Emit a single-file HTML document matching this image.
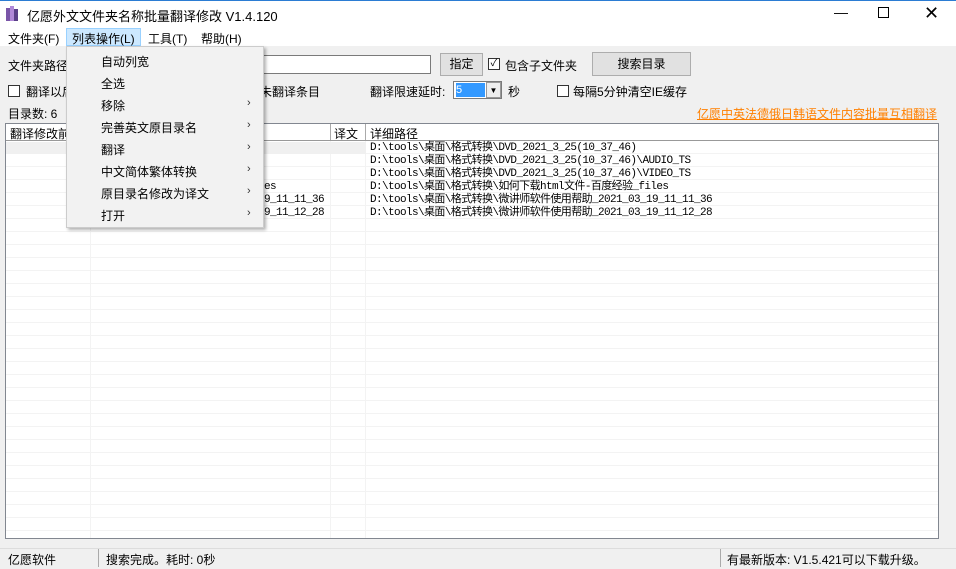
<!DOCTYPE html>
<html><head><meta charset="utf-8"><style>
*{margin:0;padding:0;box-sizing:border-box}
body{width:956px;height:569px;background:#f0f0f0;font-family:"Liberation Sans","Noto Sans CJK SC",sans-serif;font-size:12px;color:#000;position:relative;overflow:hidden}
.a{position:absolute;white-space:nowrap}
.mono{font-family:"Liberation Mono","Noto Sans CJK SC",monospace;font-size:11px;letter-spacing:-0.6px}
.cb{position:absolute;width:12px;height:12px;border:1px solid #333;background:#fff}
.btn{position:absolute;background:#e1e1e1;border:1px solid #adadad;text-align:center}
.mi{position:absolute;left:34px;font-size:12px}
.ar{position:absolute;left:180px;font-size:11px;color:#333}
</style></head><body>
<div class="a" style="left:0;top:0;width:956px;height:28px;background:#fff;border-top:1px solid #2b7cd3"></div>
<svg class="a" style="left:6px;top:6px" width="14" height="16"><rect x="0" y="2" width="4" height="13" fill="#7a55a8"/><rect x="4" y="0" width="4" height="15" fill="#b088d8"/><rect x="8" y="3" width="4" height="12" fill="#5a3f88"/></svg>
<div class="a" style="left:27px;top:6px;font-size:13px">亿愿外文文件夹名称批量翻译修改 V1.4.120</div>
<div class="a" style="left:834px;top:4px;font-size:14px">—</div>
<div class="a" style="left:878px;top:7px;width:11px;height:11px;border:1px solid #000"></div>
<div class="a" style="left:924px;top:3px;font-size:18px">✕</div>
<div class="a" style="left:0;top:28px;width:956px;height:18px;background:#fff"></div>
<div class="a" style="left:8px;top:30px">文件夹(F)</div>
<div class="a" style="left:66px;top:28px;width:75px;height:18px;background:#cce8ff;border:1px solid #99d1ff"></div>
<div class="a" style="left:72px;top:30px">列表操作(L)</div>
<div class="a" style="left:148px;top:30px">工具(T)</div>
<div class="a" style="left:201px;top:30px">帮助(H)</div>

<div class="a" style="left:8px;top:57px">文件夹路径</div>
<div class="a" style="left:230px;top:55px;width:201px;height:19px;background:#fff;border:1px solid #7a7a7a"></div>
<div class="btn" style="left:440px;top:53px;width:43px;height:23px;line-height:21px">指定</div>
<div class="cb" style="left:488px;top:58px;font-size:10px;line-height:10px;text-align:center">✓</div>
<div class="a" style="left:505px;top:57px">包含子文件夹</div>
<div class="btn" style="left:592px;top:52px;width:99px;height:24px;line-height:22px">搜索目录</div>
<div class="cb" style="left:8px;top:85px"></div>
<div class="a" style="left:26px;top:83px">翻译以后</div>
<div class="a" style="left:260px;top:83px">未翻译条目</div>
<div class="a" style="left:370px;top:83px">翻译限速延时:</div>
<div class="a" style="left:453px;top:81px;width:49px;height:18px;background:#fff;border:1px solid #7a7a7a"></div>
<div class="a" style="left:456px;top:83px;width:29px;height:14px;background:#3399ff;color:#fff;font-size:11px;line-height:14px">5</div>
<div class="a" style="left:486px;top:82px;width:15px;height:16px;border:1px solid #999;background:#eee;font-size:8px;text-align:center;line-height:16px">▼</div>
<div class="a" style="left:508px;top:83px">秒</div>
<div class="cb" style="left:557px;top:85px"></div>
<div class="a" style="left:573px;top:83px">每隔5分钟清空IE缓存</div>
<div class="a" style="left:8px;top:105px">目录数: 6</div>
<div class="a" style="left:697px;top:105px;color:#ff8000;text-decoration:underline">亿愿中英法德俄日韩语文件内容批量互相翻译</div>

<div class="a" style="left:5px;top:123px;width:934px;height:416px;background:#fff;border:1px solid #828790"></div>
<div class="a" style="left:6px;top:141px;width:932px;height:397px;background:repeating-linear-gradient(#fff 0 12px,#f3f3f3 12px 13px)"></div>
<div class="a" style="left:6px;top:124px;width:932px;height:17px;border-bottom:1px solid #999;background:#fff"></div>
<div class="a" style="left:10px;top:125px">翻译修改前</div>
<div class="a" style="left:330px;top:124px;height:16px;border-left:1px solid #aaa"></div>
<div class="a" style="left:365px;top:124px;height:16px;border-left:1px solid #aaa"></div>
<div class="a" style="left:334px;top:125px">译文</div>
<div class="a" style="left:370px;top:125px">详细路径</div>
<div class="a" style="left:90px;top:141px;height:397px;border-left:1px solid #f3f3f3"></div>
<div class="a" style="left:330px;top:141px;height:397px;border-left:1px solid #f3f3f3"></div>
<div class="a" style="left:365px;top:141px;height:397px;border-left:1px solid #f3f3f3"></div>
<div class="a" style="left:6px;top:142px;width:360px;height:12px;background:#f0f0f0"></div>
<div class="a mono" style="left:370px;top:142px;line-height:13px">D:\tools\桌面\格式转换\DVD_2021_3_25(10_37_46)<br>D:\tools\桌面\格式转换\DVD_2021_3_25(10_37_46)\AUDIO_TS<br>D:\tools\桌面\格式转换\DVD_2021_3_25(10_37_46)\VIDEO_TS<br>D:\tools\桌面\格式转换\如何下载html文件-百度经验_files<br>D:\tools\桌面\格式转换\微讲师软件使用帮助_2021_03_19_11_11_36<br>D:\tools\桌面\格式转换\微讲师软件使用帮助_2021_03_19_11_12_28</div>
<div class="a mono" style="left:258px;top:181px;line-height:13px">les<br>19_11_11_36<br>19_11_12_28</div>

<div class="a" style="left:66px;top:46px;width:198px;height:182px;background:#f2f2f2;border:1px solid #ccc;box-shadow:2px 2px 3px rgba(0,0,0,.3)">
<div class="mi" style="top:6px">自动列宽</div>
<div class="mi" style="top:28px">全选</div>
<div class="mi" style="top:50px">移除</div><div class="ar" style="top:50px">›</div>
<div class="mi" style="top:72px">完善英文原目录名</div><div class="ar" style="top:72px">›</div>
<div class="mi" style="top:94px">翻译</div><div class="ar" style="top:94px">›</div>
<div class="mi" style="top:116px">中文简体繁体转换</div><div class="ar" style="top:116px">›</div>
<div class="mi" style="top:138px">原目录名修改为译文</div><div class="ar" style="top:138px">›</div>
<div class="mi" style="top:160px">打开</div><div class="ar" style="top:160px">›</div>
</div>

<div class="a" style="left:0;top:548px;width:956px;height:21px;background:#f0f0f0;border-top:1px solid #ddd"></div>
<div class="a" style="left:8px;top:551px">亿愿软件</div>
<div class="a" style="left:98px;top:549px;height:18px;border-left:1px solid #aaa"></div>
<div class="a" style="left:106px;top:551px">搜索完成。耗时: 0秒</div>
<div class="a" style="left:720px;top:549px;height:18px;border-left:1px solid #aaa"></div>
<div class="a" style="left:727px;top:551px">有最新版本: V1.5.421可以下载升级。</div>
</body></html>
